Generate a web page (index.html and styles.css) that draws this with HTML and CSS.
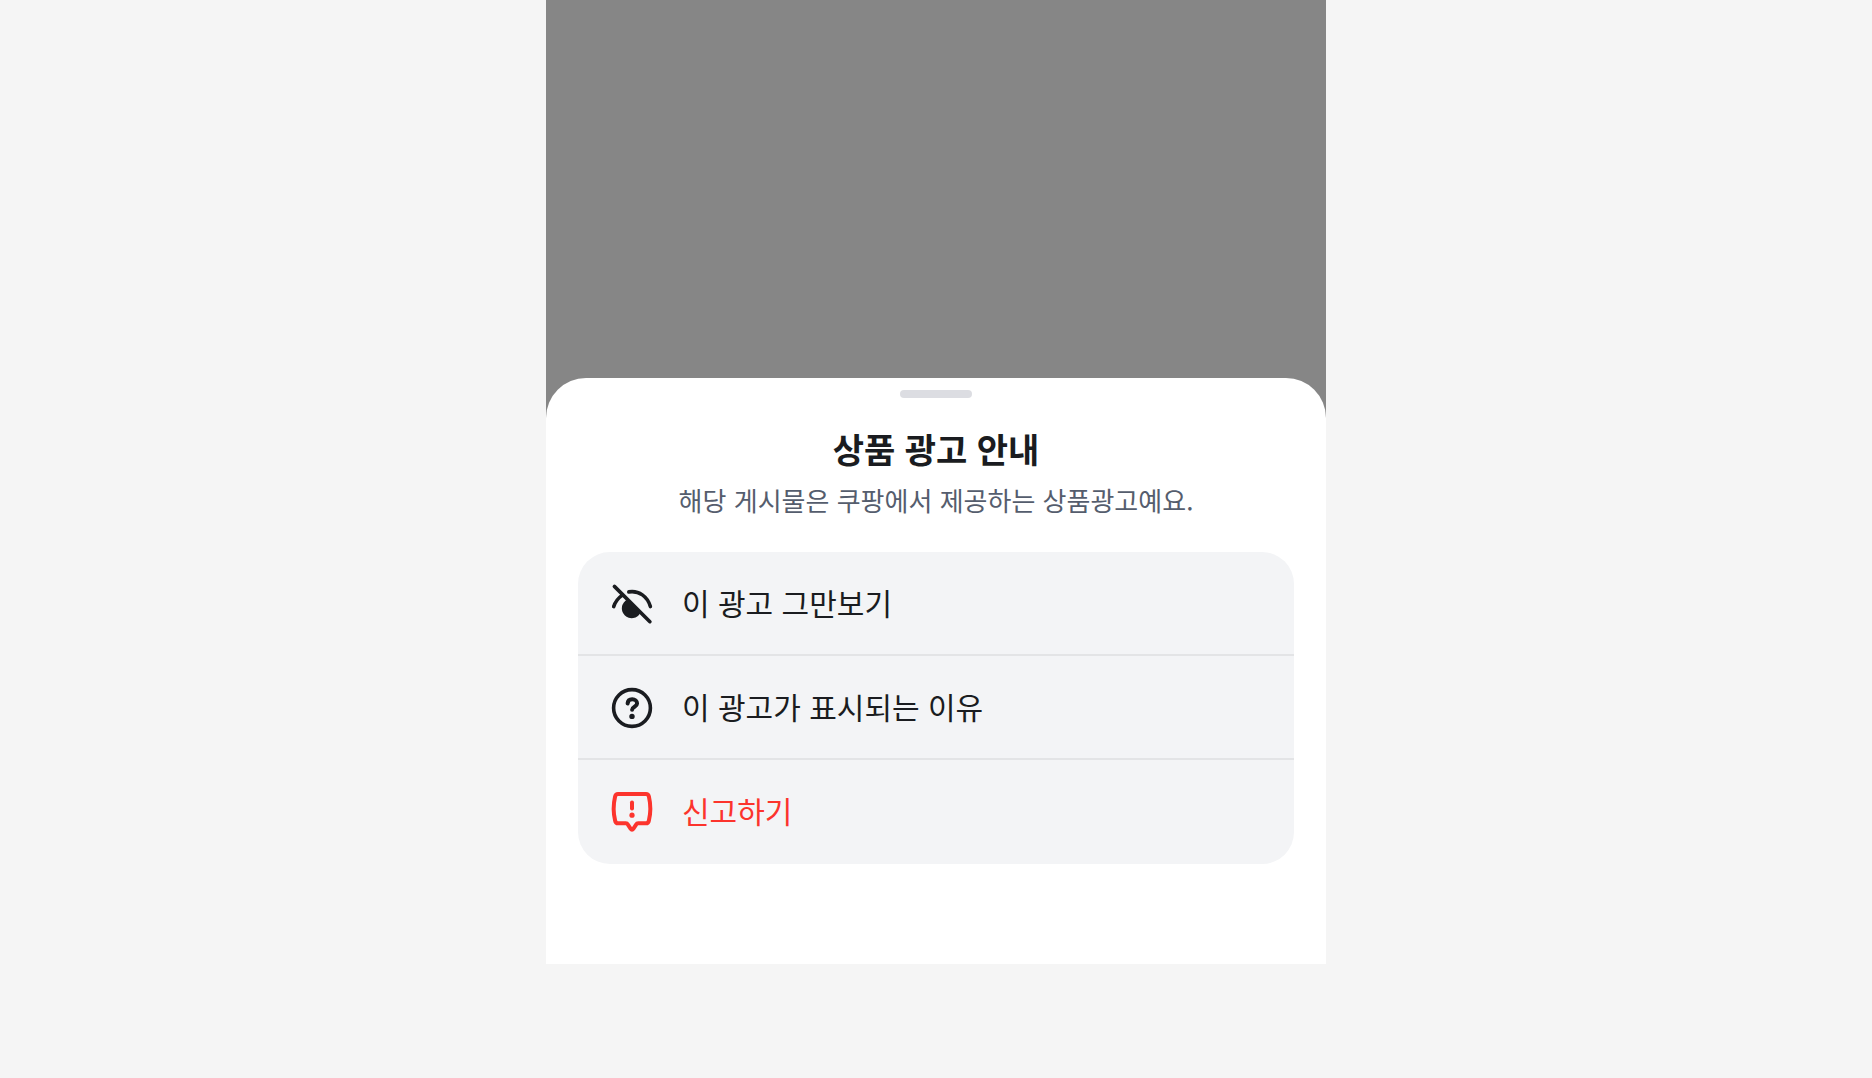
FILE: index.html
```
<!DOCTYPE html>
<html lang="ko">
<head>
<meta charset="UTF-8" />
<meta name="viewport" content="width=device-width, initial-scale=1" />
<title>상품 광고 안내</title>
<link rel="stylesheet" href="styles.css">
</head>
<body>
  <div class="screen">
    <section class="sheet" role="dialog" aria-labelledby="sheetTitle">
      <div class="handle"></div>
      <h1 id="sheetTitle">상품 광고 안내</h1>
      <p class="description">해당 게시물은 쿠팡에서 제공하는 상품광고예요.</p>

      <ul class="menu">
        <li>
          <button type="button" class="menu-item">
            <svg class="icon" viewBox="0 0 44 44" aria-hidden="true">
              <path class="line" d="M4.4 4.4L39.9 39.7M3.7 24.6C5.2 20 8 16.2 12 13.4M18.8 9.9C29 8.2 37.6 14.7 40.4 24.6" />
              <path class="fill" d="M17.5 17.5A9.8 9.8 0 1 0 30.5 30.5Z" />
            </svg>
            <span>이 광고 그만보기</span>
          </button>
        </li>
        <li>
          <button type="button" class="menu-item">
            <svg class="icon" viewBox="0 0 44 44" aria-hidden="true">
              <circle class="line" cx="22" cy="22" r="18.4" />
              <path class="line bold" d="M17.6 17.5C17.8 14.7 19.7 13.2 22.2 13.2C25 13.2 27.1 15 27.1 17.6C27.1 20.7 22.2 20.8 22.1 23.7" />
              <circle class="fill" cx="22" cy="30.4" r="2.7" />
            </svg>
            <span>이 광고가 표시되는 이유</span>
          </button>
        </li>
        <li>
          <button type="button" class="menu-item danger">
            <svg class="icon" viewBox="0 0 44 44" aria-hidden="true">
              <path class="line bold" d="M8 4H36C37.7 4 38.5 4.9 38.9 6.5C40.6 13.8 40.6 23.5 38.9 30.5C38.5 32.5 37.5 33.3 36 33.3H28.2C27.2 33.3 26.6 33.7 26.1 34.6L23.3 38.8C22.5 39.9 21.5 39.9 20.7 38.8L17.9 34.6C17.4 33.7 16.8 33.3 15.8 33.3H8C6.5 33.3 5.5 32.5 5.1 30.5C3.4 23.5 3.4 13.8 5.1 6.5C5.5 4.9 6.3 4 8 4Z" />
              <path class="line bold" d="M22 12.6V18.4" />
              <circle class="fill" cx="22" cy="25.2" r="2.6" />
            </svg>
            <span>신고하기</span>
          </button>
        </li>
      </ul>
    </section>
  </div>
</body>
</html>
```
FILE: styles.css
```
* {
  box-sizing: border-box;
}
body {
  margin: 0;
  background: #f5f5f5;
  font-family: "Noto Sans CJK KR", sans-serif;
  color: #1a1c20;
}
.screen {
  max-width: 780px;
  margin: 0 auto;
  padding-top: 378px;
  background: #868686;
}
.sheet {
  padding: 12px 32px 100px;
  background: #fff;
  border-radius: 40px 40px 0 0;
  text-align: center;
}
.handle {
  width: 72px;
  height: 8px;
  margin: 0 auto 28px;
  border-radius: 4px;
  background: #dcdde2;
}
h1 {
  margin: 0;
  font-size: 34px;
  line-height: 46px;
  font-weight: 700;
}
.description {
  margin: 10px 0 34px;
  font-size: 26px;
  line-height: 36px;
  color: #555d6d;
}
.menu {
  margin: 0;
  padding: 0;
  list-style: none;
  background: #f3f4f6;
  border-radius: 32px;
  overflow: hidden;
}
.menu-item {
  display: flex;
  align-items: center;
  gap: 28px;
  width: 100%;
  min-height: 104px;
  padding: 0 32px;
  border: none;
  background: none;
  color: inherit;
  font-family: inherit;
  font-size: 30px;
  line-height: 40px;
  text-align: left;
  cursor: pointer;
}
.menu-item span {
  padding-bottom: 4px;
}
.menu li:not(:last-child) {
  box-shadow: inset 0 -2px #e3e4e6;
}
.menu-item.danger {
  color: #fc342d;
}
.icon {
  flex: none;
  width: 44px;
  height: 44px;
}
.line {
  fill: none;
  stroke: currentColor;
  stroke-width: 3.6;
  stroke-linecap: round;
  stroke-linejoin: round;
}
.line.bold {
  stroke-width: 4;
}
.fill {
  fill: currentColor;
}
```
